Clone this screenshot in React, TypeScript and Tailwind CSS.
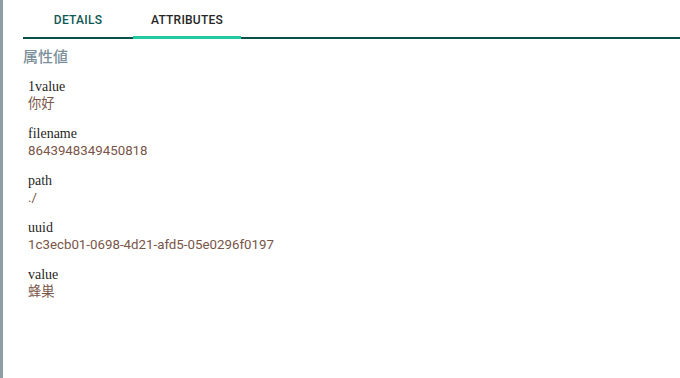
import React from 'react';

const attributes = [
  { key: '1value', value: '你好' },
  { key: 'filename', value: '8643948349450818' },
  { key: 'path', value: './' },
  { key: 'uuid', value: '1c3ecb01-0698-4d21-afd5-05e0296f0197' },
  { key: 'value', value: '蜂巣' },
];

export default function App() {
  return (
    <div
      className="flex h-[378px] w-[680px] overflow-hidden bg-white"
      style={{ fontFamily: "Roboto, 'Noto Sans CJK JP', sans-serif" }}
    >
      {/* left rail */}
      <div className="w-[3px] shrink-0 bg-[#8d9ea7]" />

      <div className="flex-1 pl-5">
        {/* Tabs */}
        <div className="flex h-[39px] border-b-[2px] border-[#0a4f4b]">
          <button className="w-[110px] pt-[2px] text-[12px] font-medium uppercase tracking-[0.02em] text-[#0e5853]">
            Details
          </button>
          <button className="relative w-[108px] pt-[2px] text-[12px] font-medium uppercase tracking-[0.02em] text-[#262626]">
            Attributes
            <span className="absolute bottom-[-2px] left-0 right-0 h-[3px] bg-[#22c9a1]" />
          </button>
        </div>

        <h2 className="mt-[8px] text-[15px] font-medium leading-[20px] text-[#7b8f9a]">属性値</h2>

        <div className="mt-[11px] flex flex-col gap-[13px] pl-[5px]">
          {attributes.map((a) => (
            <div key={a.key}>
              <div
                className="text-[14px] leading-[17px] text-[#1f1f1f]"
                style={{ fontFamily: "'Liberation Serif', serif" }}
              >
                {a.key}
              </div>
              <div className="text-[13.3px] leading-[17px] text-[#795548]">{a.value}</div>
            </div>
          ))}
        </div>
      </div>
    </div>
  );
}
